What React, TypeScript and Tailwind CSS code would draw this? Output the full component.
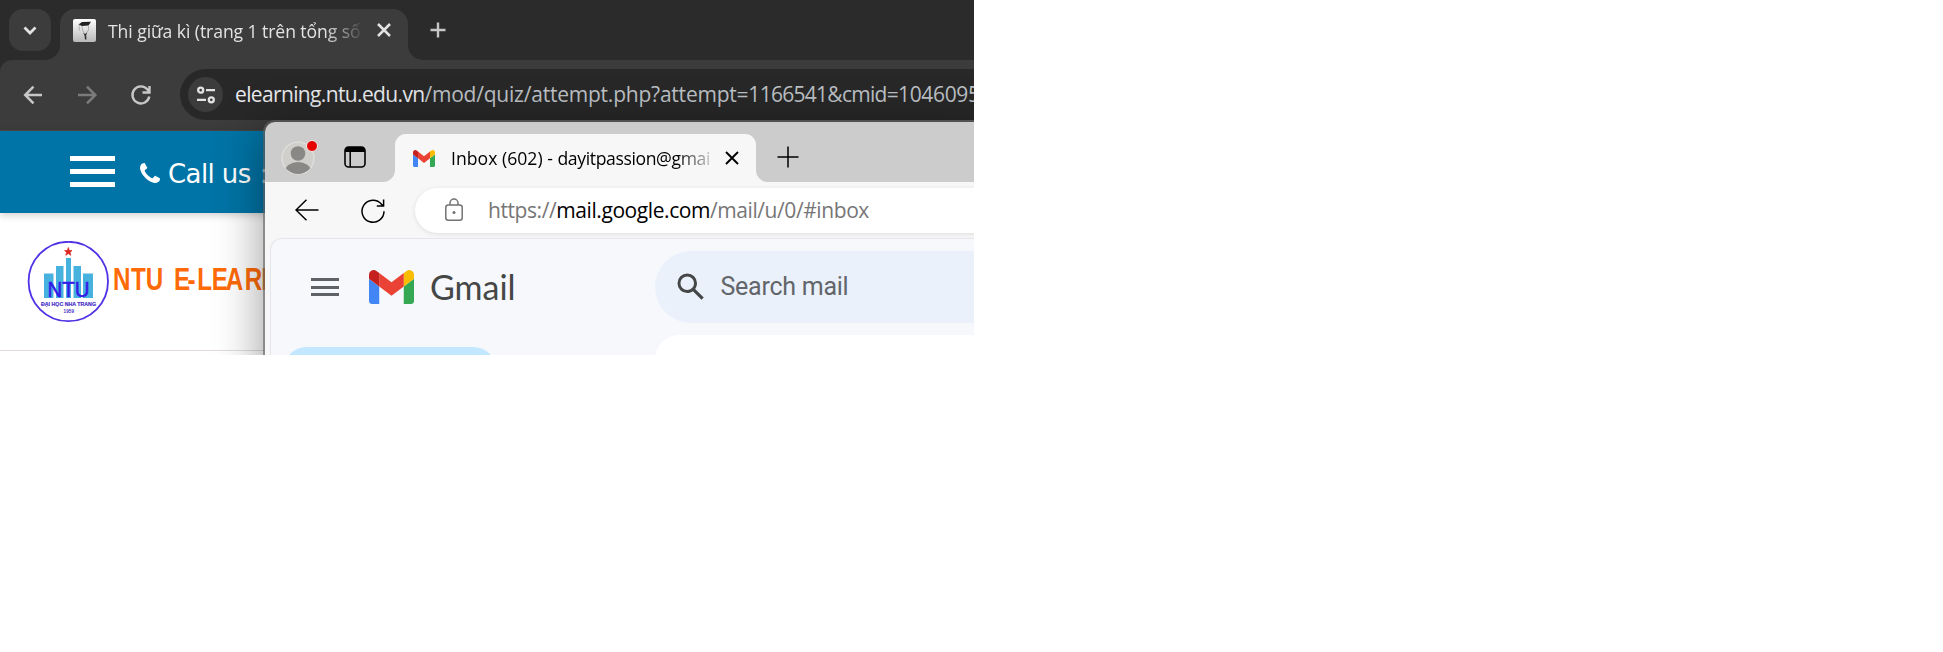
import type { ReactNode } from "react";

function Line({ d, className, w = 2 }: { d: string; className: string; w?: number }) {
  return (
    <svg viewBox="0 0 24 24" className={className} fill="none" stroke="currentColor" strokeWidth={w}>
      <path d={d} />
    </svg>
  );
}

function Flare({ d, className }: { d: string; className: string }) {
  return (
    <svg viewBox="0 0 15 15" className={className} fill="currentColor">
      <path d={d} />
    </svg>
  );
}

const LEFT_FLARE = "M15 0V15H0A15 15 0 0 0 15 0Z";
const RIGHT_FLARE = "M0 0V15H15A15 15 0 0 1 0 0Z";

function GmailMark({ className }: { className: string }) {
  return (
    <svg viewBox="52 42 88 66" className={className} preserveAspectRatio="none">
      <path fill="#4285f4" d="M58 108h14V74L52 59v43c0 3.32 2.69 6 6 6" />
      <path fill="#34a853" d="M120 108h14c3.32 0 6-2.69 6-6V59l-20 15" />
      <path fill="#fbbc04" d="M120 48v26l20-15v-8c0-7.42-8.47-11.65-14.4-7.2" />
      <path fill="#ea4335" d="M72 74V48l24 18 24-18v26L96 92" />
      <path fill="#c5221f" d="M52 51v8l20 15V48l-5.600-4.200c-5.940-4.450-14.400-.220-14.400 7.200" />
    </svg>
  );
}

function PhoneIcon({ className }: { className: string }) {
  return (
    <svg viewBox="192 128 1408 1408" className={className} fill="currentColor">
      <path d="M1600 1240q0 27-10 70.500t-21 68.500q-21 50-122 106-94 51-186 51-27 0-53-3.500t-57.500-12.500-47-14.500-55.500-20.500-49-18q-98-35-175-83-127-79-264-216t-216-264q-48-77-83-175-3-9-18-49t-20.500-55.500-14.500-47-12.500-57.500-3.500-53q0-92 51-186 56-101 106-122 25-11 68.500-21t70.500-10q14 0 21 3 18 6 53 76 11 19 30 54t35 63.500 31 53.500q3 4 17.500 25t21.500 35.500 7 28.500q0 20-28.500 50t-62 55-62 53-28.500 46q0 9 5 22.500t8.500 20.500 14 24 11.500 19q76 137 174 235t235 174q2 1 19 11.500t24 14 20.500 8.500 22.500 5q18 0 46-28.500t53-62 55-62 50-28.500q14 0 28.500 7t35.500 21.500 25 17.500q25 15 53.500 31t63.500 35 54 30q70 35 76 53 3 7 3 21z" />
    </svg>
  );
}

function Favicon() {
  return (
    <svg viewBox="0 0 23 23" className="ml-[13px] size-[23px] shrink-0">
      <defs>
        <linearGradient id="fav" x1="0" y1="0" x2="0" y2="1">
          <stop offset="0" stopColor="#ffffff" />
          <stop offset="1" stopColor="#b9b9b9" />
        </linearGradient>
      </defs>
      <rect width="23" height="23" rx="2" fill="url(#fav)" />
      <path d="M5.500 5.500L9 3L18 2.800L15.500 6.500L9 7Z" fill="#222" />
      <path d="M6.200 5.500V11.500M9 7L9.500 11L11 13.500M15.500 7V11L13.500 14" stroke="#999" strokeWidth=".7" fill="none" />
      <path d="M10 13.500L12 15L14 13.500L13.200 16.500L13.500 20.500H12L11.500 16.500Z" fill="#333" />
    </svg>
  );
}

function ChromeTabs() {
  return (
    <div className="flex h-[60px] items-end bg-[#2b2b2b] text-[#e3e3e3]">
      <div className="mb-[9px] ml-[9px] flex size-[42px] shrink-0 items-center justify-center rounded-[14px] bg-[#3c3c3c]">
        <Line d="M6.500 9.500L12 15L17.500 9.500" w={2.700} className="size-6" />
      </div>
      <Flare d={LEFT_FLARE} className="-ml-[6px] size-[15px] shrink-0 text-[#3c3c3c]" />
      <div className="flex h-[51px] w-[348px] shrink-0 items-center rounded-t-[15px] bg-[#3c3c3c] pb-[9px]">
        <Favicon />
        <div className="ml-3 h-[30px] w-[252px] overflow-hidden whitespace-nowrap pt-px font-['Open_Sans',sans-serif] text-[17.600px] leading-[30px] tracking-[-0.080px] [mask-image:linear-gradient(90deg,#000_86%,transparent_102%)]">
          Thi giữa kì (trang 1 trên tổng số
        </div>
        <Line d="M6 6L18 18M18 6L6 18" w={2.500} className="ml-3 size-6 shrink-0" />
      </div>
      <Flare d={RIGHT_FLARE} className="size-[15px] shrink-0 text-[#3c3c3c]" />
      <Line d="M12 4.500V19.500M4.500 12H19.500" w={2.400} className="mb-[18px] ml-[3px] size-6 shrink-0 text-[#c7c7c7]" />
    </div>
  );
}

function ChromeToolbar() {
  return (
    <div className="bg-[#2b2b2b]">
      <div className="flex h-[71px] rounded-tl-[12px] border-b border-[#4a4a4a] bg-[#3c3c3c] pt-[9px]">
        <div className="flex h-[51px] w-[180px] shrink-0 items-center pl-[21px] text-[#c7c7c7]">
          <Line d="M21 12H4.500M12.500 3.700L4.200 12L12.500 20.300" w={2.500} className="size-6" />
          <Line d="M3 12H20M12 3.700L20.300 12L12 20.300" w={2.500} className="ml-[30px] size-6 text-[#7b7b7b]" />
          <Line d="M20.300 13.500A8.500 8.500 0 1 1 18.500 6.500L20 8.500M20.500 3V9.500H13.500" w={2.400} className="ml-[30px] size-6" />
        </div>
        <div className="flex h-[51px] flex-1 items-center overflow-hidden rounded-l-full bg-[#282828] pl-2">
          <div className="flex size-[35px] shrink-0 items-center justify-center rounded-full bg-[#3c3c3c]">
            <svg viewBox="0 0 20 18" className="h-[18px] w-5" fill="none" stroke="#e3e3e3" strokeWidth="2.300">
              <circle cx="4.700" cy="4.200" r="2.500" />
              <path d="M10 4.200H19M1 13.800H10" />
              <circle cx="15.300" cy="13.800" r="2.500" />
            </svg>
          </div>
          <div className="ml-3 whitespace-nowrap font-['Open_Sans',sans-serif] text-[21px] tracking-[-0.220px] text-[#bdc1c6]">
            <span className="tracking-[-0.640px] text-[#e8eaed]">elearning.ntu.edu.vn</span>/mod/quiz/attempt.php?attempt=<span className="tracking-[-0.720px]">1166541&amp;cmid=</span><span className="tracking-[-0.350px]">1046095</span>
          </div>
        </div>
      </div>
    </div>
  );
}

function NtuLogo() {
  return (
    <svg viewBox="0 0 82 82" className="ml-[27px] size-[82px] shrink-0">
      <circle cx="41.300" cy="40.500" r="39.700" fill="#fff" stroke="#5232e6" strokeWidth="1.800" />
      <path d="M41.300 6.500L42.300 9.500H45L43 11.400L43.800 14.300L41.300 12.600L38.800 14.300L39.600 11.400L37.600 9.500H40.300Z" fill="#dc2620" stroke="#dc2620" strokeWidth=".7" />
      <path d="M17 32.500H26.500V57H17ZM29 25H36.500V57H29ZM39 17H44V57H39ZM46.500 25H54V57H46.500ZM56 32.500H66V57H56Z" fill="#48b2df" />
      <text x="20.500" y="56" textLength="42" lengthAdjust="spacingAndGlyphs" fontSize="22" fontFamily="Liberation Sans" fill="#351be8" stroke="#351be8" strokeWidth=".6">NTU</text>
      <text x="14" y="65" textLength="55" lengthAdjust="spacingAndGlyphs" fontSize="5.600" fontWeight="700" fontFamily="Liberation Sans" fill="#4930c8" stroke="#4930c8" strokeWidth=".2">ĐẠI HỌC NHA TRANG</text>
      <text x="36.500" y="71.500" textLength="10.500" fontSize="4.600" fontWeight="700" fontFamily="Liberation Sans" fill="#4930c8">1959</text>
    </svg>
  );
}

function SchoolWordmark() {
  return (
    <svg viewBox="0 0 160 36" className="ml-[3.500px] mt-5 h-9 w-[160px] shrink-0">
      <text
        x="0 23.100 41.900 62 78.200 95.500 108 126.500 144.500 169 190"
        y="29"
        transform="scale(.78 1)"
        fontSize="31"
        fontWeight="700"
        fontFamily="Liberation Sans"
        fill="#ff6a08"
      >
        NTU E-LEARN
      </text>
    </svg>
  );
}

function SchoolPage() {
  return (
    <div className="bg-white">
      <div className="relative flex h-[82px] items-start bg-[#0074a6] pt-[25px] text-white shadow-[0_2px_8px_rgba(0,0,0,.2)]">
        <div className="ml-[70px] flex w-[45px] flex-col gap-2">
          <div className="h-[5px] bg-white" />
          <div className="h-[5px] bg-white" />
          <div className="h-[5px] bg-white" />
        </div>
        <PhoneIcon className="ml-[25px] mt-[7px] size-5" />
        <div className="ml-2 whitespace-nowrap font-['DejaVu_Sans',sans-serif] text-[26px] leading-[36px] tracking-[-0.600px]">
          Call us<span className="ml-[9px]">:</span>
        </div>
      </div>
      <div className="flex h-[138px] items-start border-b border-[#e2dcdc] pt-7">
        <NtuLogo />
        <SchoolWordmark />
      </div>
      <div className="h-1" />
    </div>
  );
}

function EdgeTabs() {
  return (
    <div className="flex h-[60px] shrink-0 items-end bg-[#cccccc]">
      <div className="relative mb-[7px] ml-4 size-[34px] shrink-0">
        <svg viewBox="0 0 34 34" className="size-[34px]">
          <defs>
            <clipPath id="avatar"><circle cx="17" cy="17" r="16" /></clipPath>
          </defs>
          <circle cx="17" cy="17" r="16" fill="#d1cfcb" stroke="#e2e1df" strokeWidth="1.200" />
          <circle cx="17" cy="12.500" r="7.300" fill="#8a8886" />
          <ellipse cx="17" cy="30" rx="13" ry="9" fill="#8a8886" clipPath="url(#avatar)" />
        </svg>
        <div className="absolute -top-[1px] right-[-3px] size-3 rounded-full border border-[#eee] bg-[#e60000]" />
      </div>
      <svg viewBox="0 0 22 22" className="mb-[14px] ml-[29px] size-[22px] shrink-0">
        <rect x="1" y="1" width="20" height="20" rx="3.500" fill="none" stroke="#000" strokeWidth="1.600" />
        <path d="M1 6V4.500A3.500 3.500 0 0 1 4.500 1H17.500A3.500 3.500 0 0 1 21 4.500V6Z" />
        <path d="M6.200 5V21" stroke="#000" strokeWidth="1.500" />
      </svg>
      <Flare d={LEFT_FLARE} className="ml-[17px] size-3 shrink-0 text-[#f7f7f7]" />
      <div className="flex h-12 w-[361px] shrink-0 items-center rounded-t-[11px] bg-[#f7f7f7]">
        <GmailMark className="ml-[18px] h-[17px] w-[22px] shrink-0" />
        <div className="ml-[16px] h-8 w-[262px] overflow-hidden whitespace-nowrap font-['Open_Sans',sans-serif] text-[17.600px] leading-8 tracking-[0.020px] text-black [mask-image:linear-gradient(90deg,#000_86%,transparent_102%)]">
          Inbox (602) - <span className="tracking-[-0.380px]">dayitpassion@gmai</span>
        </div>
        <Line d="M6 6L18 18M18 6L6 18" w={1.900} className="ml-[7px] size-6 shrink-0" />
      </div>
      <Flare d={RIGHT_FLARE} className="size-3 shrink-0 text-[#f7f7f7]" />
      <Line d="M12 1.500V22.500M1.500 12H22.500" w={1.500} className="mb-[13px] ml-2 size-6 shrink-0" />
    </div>
  );
}

function EdgeToolbar() {
  return (
    <div className="flex h-14 shrink-0 items-start bg-[#f7f7f7] pt-[6px]">
      <div className="flex h-[45px] w-[150px] shrink-0 items-center pl-[30px]">
        <Line d="M23.500 11H0.800M11.500 0.800L1 11L11.500 21.200" w={1.500} className="size-6" />
        <Line d="M23 12.200A11 11 0 1 1 20.500 5.200L22.500 7M22.600 0.500V7H15.800" w={1.500} className="ml-[42px] size-6" />
      </div>
      <div className="flex h-[45px] flex-1 items-center rounded-l-full bg-white pl-[30px] shadow-[0_1px_5px_rgba(0,0,0,.1)]">
        <svg viewBox="0 0 18 23" className="-mt-[2px] h-[23px] w-[18px] shrink-0" fill="none" stroke="#737373" strokeWidth="1.500">
          <rect x="0.800" y="7" width="16.400" height="15.200" rx="2.500" />
          <path d="M5 7V5A4 4 0 0 1 13 5V7" />
          <circle cx="9" cy="14.500" r="1.500" fill="#737373" stroke="none" />
        </svg>
        <div className="ml-[25px] whitespace-nowrap font-['Open_Sans',sans-serif] text-[21px] tracking-[-0.420px] text-[#767676]">
          https://<span className="text-black">mail.google.com</span>/mail/u/0/#inbox
        </div>
      </div>
    </div>
  );
}

function GmailPage() {
  return (
    <div className="flex-1 bg-[#f7f7f7] pl-[5px]">
      <div className="h-full overflow-hidden rounded-tl-[12px] border-l border-t border-[#e4e5e8] bg-[#f6f8fc]">
        <div className="flex h-[84px] items-start pt-[12px]">
          <div className="flex h-[72px] w-[384px] shrink-0 items-start pl-10">
            <div className="mt-[27px] flex w-7 flex-col gap-[4.500px]">
              <div className="h-[3px] bg-[#5f6368]" />
              <div className="h-[3px] bg-[#5f6368]" />
              <div className="h-[3px] bg-[#5f6368]" />
            </div>
            <GmailMark className="ml-[30px] mt-[19px] h-[34px] w-[45px]" />
            <div className="ml-[16px] mt-[15px] font-['Lato',sans-serif] text-[34px] leading-[42px] text-[#444746]">Gmail</div>
          </div>
          <div className="flex h-[72px] flex-1 items-center rounded-l-full bg-[#eaf1fb] pl-[18px]">
            <svg viewBox="0 0 24 24" className="size-9 shrink-0" fill="#444746">
              <path d="M20.490 19l-5.730-5.730C15.530 12.200 16 10.910 16 9.500A6.500 6.500 0 1 0 9.500 16c1.410 0 2.700-.470 3.770-1.240L19 20.490 20.490 19zM5 9.500C5 7.010 7.010 5 9.500 5S14 7.010 14 9.500 11.990 14 9.500 14 5 11.990 5 9.500z" />
            </svg>
            <div className="ml-[11.500px] whitespace-nowrap font-['Roboto',sans-serif] text-[25px] tracking-[-0.250px] text-[#626569]">Search mail</div>
          </div>
        </div>
        <div className="flex items-start">
          <div className="ml-[12px] mt-6 h-[84px] w-[214px] shrink-0 rounded-[24px] bg-[#c2e7ff]" />
          <div className="ml-[158px] mt-[12px] h-[84px] flex-1 rounded-tl-[24px] bg-white" />
        </div>
      </div>
    </div>
  );
}

function FrontWindow({ children }: { children: ReactNode }) {
  return (
    <div className="absolute left-[263px] top-[120px] flex h-[270px] w-[730px] flex-col overflow-hidden rounded-tl-[12px] border-l-2 border-t-2 border-[#5a5a5a]/70 shadow-[0_8px_48px_rgba(0,0,0,.4)]">
      {children}
    </div>
  );
}

export default function App() {
  return (
    <div className="h-[652px] w-full bg-white">
      <div className="relative h-[355px] w-[974px] overflow-hidden">
        <ChromeTabs />
        <ChromeToolbar />
        <SchoolPage />
        <FrontWindow>
          <EdgeTabs />
          <EdgeToolbar />
          <GmailPage />
        </FrontWindow>
      </div>
    </div>
  );
}
